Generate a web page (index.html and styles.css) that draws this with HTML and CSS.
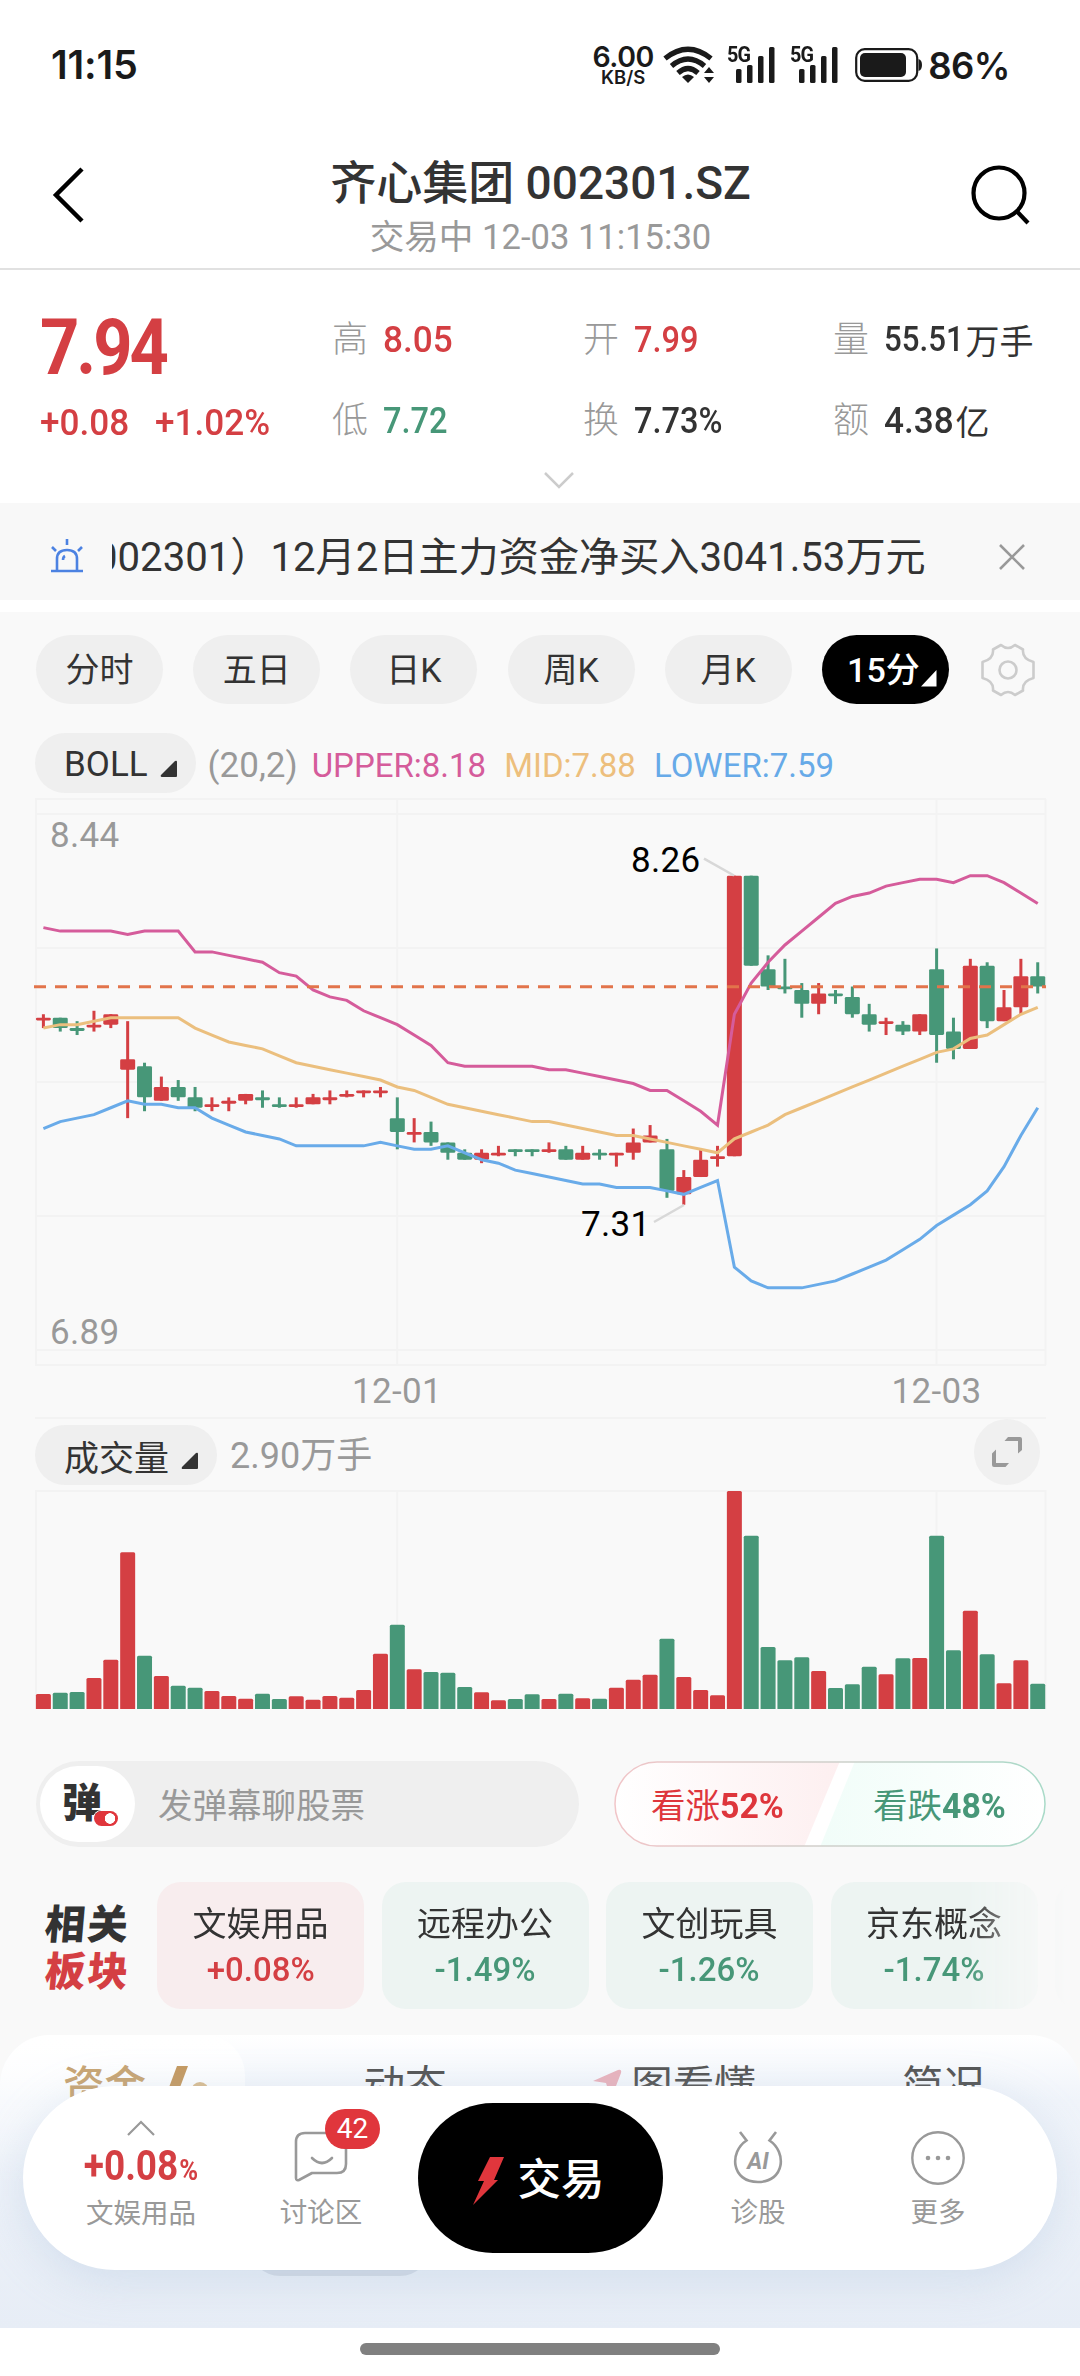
FILE: index.html
```html
<!DOCTYPE html>
<html lang="zh-CN">
<head>
  <meta charset="UTF-8">
  <meta name="viewport" content="width=device-width, initial-scale=1.0">
  <title>齐心集团 002301.SZ</title>
  <link rel="stylesheet" href="styles.css">
</head>
<body>

<div class="status-bar">
  <span class="time">11:15</span>
  <div class="status-icons">
    <div class="speed"><b>6.00</b><span>KB/S</span></div>
    <svg class="wifi" width="52" height="38" viewBox="0 0 52 38" fill="none" stroke="#1a1a1a" stroke-width="5.200">
      <path d="M2 12.500 Q25 -6 48 12.500"/>
      <path d="M8.500 20 Q25 6 41.500 20"/>
      <path d="M15 27 Q25 18 35 27"/>
      <path d="M19 31 Q25 26 31 31 L25 37 Z" fill="#1a1a1a" stroke="none"/>
      <path d="M41 27 L46 21 L51 27 Z M41 31 L46 37 L51 31 Z" fill="#1a1a1a" stroke="none"/>
    </svg>
    <div class="signal">
      <span>5G</span>
      <svg width="40" height="38" viewBox="0 0 40 38" fill="#1a1a1a"><rect x="0" y="23" width="5.500" height="14" rx="1.500"/><rect x="11" y="19" width="5.500" height="18" rx="1.500"/><rect x="22" y="10" width="5.500" height="27" rx="1.500"/><rect x="33" y="1" width="5.500" height="36" rx="1.500"/></svg>
    </div>
    <div class="signal">
      <span>5G</span>
      <svg width="40" height="38" viewBox="0 0 40 38" fill="#1a1a1a"><rect x="0" y="23" width="5.500" height="14" rx="1.500"/><rect x="11" y="19" width="5.500" height="18" rx="1.500"/><rect x="22" y="10" width="5.500" height="27" rx="1.500"/><rect x="33" y="1" width="5.500" height="36" rx="1.500"/></svg>
    </div>
    <svg class="battery" width="68" height="34" viewBox="0 0 68 34">
      <rect x="1.200" y="1.200" width="61" height="31.600" rx="8.500" fill="none" stroke="#1a1a1a" stroke-width="2.200"/>
      <rect x="5" y="5" width="46" height="24" rx="5" fill="#1a1a1a"/>
      <path d="M63.500 11 Q67 12 67 17 Q67 22 63.500 23 Z" fill="#1a1a1a"/>
    </svg>
    <span class="percent">86%</span>
  </div>
</div>

<header class="header">
  <svg width="40" height="60" viewBox="0 0 40 60" fill="none" stroke="#000" stroke-width="4.500"><path d="M35 4 L9 30 L35 56"/></svg>
  <div class="header-title">
    <h1>齐心集团 002301.SZ</h1>
    <p>交易中 12-03 11:15:30</p>
  </div>
  <svg width="64" height="64" viewBox="0 0 64 64" fill="none" stroke="#000" stroke-width="4.200"><circle cx="30" cy="30" r="25.500"/><path d="M48 48.500 L59 60"/></svg>
</header>

<section class="quote">
  <div class="quote-grid">
    <div class="price"><span class="num">7.94</span></div>
    <div class="cell"><i>高</i><b class="num wide up">8.05</b></div>
    <div class="cell"><i>开</i><b class="num up">7.99</b></div>
    <div class="cell cell-small"><i>量</i><b class="num">55.51</b><span class="unit">万手</span></div>
    <div class="change up"><span class="num wide">+0.08</span><span class="num wide">+1.02%</span></div>
    <div class="cell"><i>低</i><b class="num down">7.72</b></div>
    <div class="cell"><i>换</i><b class="num">7.73%</b></div>
    <div class="cell"><i>额</i><b class="num wide">4.38</b><span class="unit unit-b">亿</span></div>
  </div>
  <svg class="more" width="34" height="20" viewBox="0 0 34 20" fill="none" stroke="#ccc" stroke-width="2.500"><path d="M3 2 L17 16 L31 2"/></svg>
</section>

<div class="alert">
  <svg width="36" height="38" viewBox="0 0 36 38" fill="none" stroke="#4c82e2" stroke-width="2.600">
    <path d="M1 34H33M7 34V22Q7 13 17 13Q27 13 27 22V34M17 2V8M2 10L6 14M32 10L28 14M13 23Q13 20 15 19"/>
  </svg>
  <div class="alert-text"><span>002301）12月2日主力资金净买入3041.53万元</span></div>
  <svg width="28" height="28" viewBox="0 0 28 28" fill="none" stroke="#999" stroke-width="2.600"><path d="M2 2L26 26M26 2L2 26"/></svg>
</div>

<main class="main">
  <div class="tabs">
    <span class="tab">分时</span>
    <span class="tab">五日</span>
    <span class="tab">日K</span>
    <span class="tab">周K</span>
    <span class="tab">月K</span>
    <span class="tab active">15分<svg class="corner" width="16" height="17" viewBox="0 0 16 17"><path d="M15.500 0V16.500H0Z" fill="#fff"/></svg></span>
    <svg class="gear" width="56" height="56" viewBox="0 0 56 56" fill="none" stroke="#ccc" stroke-width="2.600" stroke-linejoin="round">
      <path d="M21 3 Q28 9 35 3 L43 7.500 Q42 17 53.500 20 V36 Q42 39 43 48.500 L35 53 Q28 47 21 53 L13 48.500 Q14 39 2.500 36 V20 Q14 17 13 7.500 Z"/>
      <circle cx="28" cy="28" r="8.500"/>
    </svg>
  </div>

  <div class="indicator">
    <span class="pill">BOLL<svg width="18" height="18" viewBox="0 0 18 18"><path d="M15 1Q17 0 17 2V16Q17 17 16 17H2Q0 17 1 15Z" fill="#333"/></svg></span>
    <span class="param">(20,2)</span>
    <span class="upper">UPPER:8.18</span>
    <span class="mid">MID:7.88</span>
    <span class="lower">LOWER:7.59</span>
  </div>

  <svg id="kline" class="kline" width="1080" height="623" viewBox="0 796 1080 623"></svg>

  <div class="volume-head">
    <span class="pill">成交量<svg width="18" height="18" viewBox="0 0 18 18"><path d="M15 1Q17 0 17 2V16Q17 17 16 17H2Q0 17 1 15Z" fill="#333"/></svg></span>
    <span class="param">2.90万手</span>
    <span class="expand"><svg width="30" height="30" viewBox="0 0 30 30" fill="#999"><path d="M16 0H28Q30 0 30 2V13L26 16.500V4H12.500ZM4 12.500V26H17L13.500 30H2Q0 30 0 28V16.500Z"/></svg></span>
  </div>

  <svg id="volume" class="volume" width="1080" height="220" viewBox="0 1490 1080 220"></svg>

  <div class="chat-row">
    <div class="chat-input">
      <span class="danmu">弹<i></i></span>
      <span class="placeholder">发弹幕聊股票</span>
    </div>
    <div class="vote">
      <svg class="vote-bg" width="432" height="86" viewBox="0 0 432 86">
        <defs>
          <linearGradient id="vr"><stop offset="0" stop-color="#fff"/><stop offset="1" stop-color="#fdeff0"/></linearGradient>
          <linearGradient id="vg"><stop offset="0" stop-color="#f1fdf9"/><stop offset="1" stop-color="#fff"/></linearGradient>
          <linearGradient id="vb"><stop offset="0" stop-color="#f1c5c8"/><stop offset=".5" stop-color="#cfd0cb"/><stop offset="1" stop-color="#a9dac8"/></linearGradient>
          <clipPath id="vc"><rect x="1" y="1" width="430" height="84" rx="42"/></clipPath>
        </defs>
        <g clip-path="url(#vc)">
          <rect width="432" height="86" fill="#fff"/>
          <path d="M0 0H226L190 86H0Z" fill="url(#vr)"/>
          <path d="M241 0H432V86H206Z" fill="url(#vg)"/>
        </g>
        <rect x="1" y="1" width="430" height="84" rx="42" fill="none" stroke="url(#vb)" stroke-width="1.500"/>
      </svg>
      <span class="bull">看涨<b>52%</b></span>
      <span class="bear">看跌<b>48%</b></span>
    </div>
  </div>

  <div class="sectors">
    <div class="sectors-title"><span>相关</span><span class="red">板块</span></div>
    <div class="sector-list">
      <div class="sector sector-up"><span>文娱用品</span><b>+0.08%</b></div>
      <div class="sector"><span>远程办公</span><b>-1.49%</b></div>
      <div class="sector"><span>文创玩具</span><b>-1.26%</b></div>
      <div class="sector"><span>京东概念</span><b>-1.74%</b></div>
      <div class="sector"></div>
    </div>
  </div>

  <section class="panel">
    <div class="panel-tabs">
      <span class="gold">资金<svg width="46" height="40" viewBox="0 0 46 40"><path d="M13 0H24L12 32H1Z" fill="#c59a62"/><circle cx="36" cy="25" r="9" fill="#d9bc91"/></svg></span>
      <span>动态</span>
      <span><svg class="arrow" width="30" height="30" viewBox="0 0 30 30"><path d="M0 12L25 1Q29 0 28 4L18 30L13 14Z" fill="#e9b3bd"/></svg>图看懂</span>
      <span>简况</span>
    </div>
    <div class="panel-chip"></div>
  </section>
</main>

<nav class="nav">
  <div class="nav-item nav-sector">
    <svg width="28" height="16" viewBox="0 0 28 16" fill="none" stroke="#999" stroke-width="2.200"><path d="M1 15L14 2L27 15"/></svg>
    <strong class="num">+0.08<small>%</small></strong>
    <span>文娱用品</span>
  </div>
  <div class="nav-item nav-talk">
    <svg width="54" height="52" viewBox="0 0 54 52" fill="none" stroke="#999" stroke-width="2.600" stroke-linejoin="round" stroke-linecap="round"><path d="M11 2H43Q52 2 52 11V33Q52 42 43 42H18L5 49Q2 50 2 47V11Q2 2 11 2ZM18 27Q28 37 38 27"/></svg>
    <em>42</em>
    <span>讨论区</span>
  </div>
  <div class="trade">
    <svg width="32" height="48" viewBox="0 0 32 48"><path d="M17 0H31L21 23H25L0 48L11 24H5Z" fill="#e0363c"/></svg>
    <span>交易</span>
  </div>
  <div class="nav-item nav-ai">
    <svg width="52" height="54" viewBox="0 0 52 54" fill="none" stroke="#999" stroke-width="2.600">
      <path d="M8 2L14.500 10.500C-3 22 -1 52 26 52C53 52 55 22 37.500 10.500L44 2"/>
      <text x="26" y="39" text-anchor="middle" class="ai-text">AI</text>
    </svg>
    <span>诊股</span>
  </div>
  <div class="nav-item nav-more">
    <svg width="56" height="56" viewBox="0 0 56 56"><circle cx="28" cy="28" r="25.700" fill="none" stroke="#999" stroke-width="2.400"/><g fill="#999"><circle cx="18" cy="28" r="2.300"/><circle cx="28" cy="28" r="2.300"/><circle cx="38" cy="28" r="2.300"/></g></svg>
    <span>更多</span>
  </div>
</nav>

<div class="home"><i></i></div>

<script src="script.js"></script>
</body>
</html>
```
FILE: styles.css
```css
* { box-sizing: border-box; }
body {
  margin: 0;
  width: 1080px;
  height: 2376px;
  position: relative;
  overflow: hidden;
  background: #fff;
  color: #333;
  font-family: Roboto, "Noto Sans CJK SC", sans-serif;
}
svg { display: block; flex: none; }
h1, p { margin: 0; font-weight: normal; }
i, em { font-style: normal; }
.up { color: #d43f43; }
.down { color: #479778; }
.num { display: inline-block; transform: scaleX(.88); transform-origin: left center; white-space: nowrap; }
.num.wide { transform: scaleX(.95); }

/* status bar */
.status-bar { height: 130px; padding: 0 70px 0 51px; display: flex; align-items: center; justify-content: space-between; color: #1a1a1a; }
.time { font: 600 39.500px Inter, sans-serif; letter-spacing: -.2px; }
.status-icons { display: flex; align-items: center; }
.speed { width: 62px; display: flex; flex-direction: column; align-items: center; font-family: Inter, sans-serif; margin-right: 9px; }
.speed b { font-size: 28.500px; line-height: 23px; font-weight: 600; letter-spacing: -.5px; }
.speed span { font-size: 18.500px; line-height: 18px; font-weight: 600; }
.signal { position: relative; display: flex; padding-left: 9px; margin-left: 14px; }
.wifi + .signal { margin-left: 12px; }
.signal span { position: absolute; left: 0; top: -4px; font: 700 22px Roboto, sans-serif; letter-spacing: -1px; transform: scaleX(.9); transform-origin: left; }
.battery { margin: 0 5px 0 16px; }
.percent { font: 600 36.500px Inter, sans-serif; letter-spacing: -.5px; margin-top: 2px; }

/* title */
.header { height: 140px; padding: 0 47px; display: flex; justify-content: space-between; align-items: center; border-bottom: 2px solid #e1e1e1; }
.header > svg { margin-top: -9px; }
.header-title { text-align: center; padding: 22px 0 0 25px; height: 140px; }
.header h1 { font-size: 46px; line-height: 64px; font-weight: 500; white-space: nowrap; }
.header p { font-size: 34.600px; line-height: 44px; color: #999; }

/* quote */
.quote { height: 233px; padding: 29px 0 0 40px; }
.quote-grid { display: grid; grid-template-columns: 292px 251px 250px 1fr; grid-template-rows: 81px 80px; }
.price { color: #d43f43; font-size: 78px; font-weight: 700; line-height: 98px; height: 81px; letter-spacing: -3.500px; }
.change { font-size: 37px; font-weight: 500; line-height: 86px; display: flex; gap: 21px; }
.cell { display: flex; align-items: center; height: 80px; font-size: 37px; white-space: nowrap; }
.cell i { color: #999; font-size: 36px; width: 51px; font-weight: 300; margin-top: -6px; }
.cell b { font-weight: 500; }
.cell-small { font-size: 35.500px; }
.unit { font-size: 34px; margin-left: -9px; }
.unit-b { margin-left: -2px; }
.more { margin: 11px 0 0 502px; }

.alert { height: 97px; background: #f8f8f8; display: flex; align-items: center; padding: 7px 54px 0 50px; }
.alert > svg:first-child { margin-top: 2px; }
.alert > svg:last-child { margin-top: 3px; }
.alert-text { margin-left: 26px; width: 820px; margin-right: 66px; padding-top: 5px; overflow: hidden; font-size: 40.150px; line-height: 60px; white-space: nowrap; }
.alert-text span { margin-left: -17px; }

/* chart area */
.main { margin-top: 12px; background: #f9f9f9; }
.tabs { padding: 23px 0 0 36px; display: flex; gap: 30.200px; align-items: center; }
.tab { position: relative; width: 127px; height: 69px; border-radius: 35px; background: #efefef; font-size: 34px; line-height: 70px; text-align: center; }
.tab.active { background: #000; color: #fff; font-weight: 500; padding-right: 4px; }
.corner { position: absolute; right: 12px; bottom: 17px; }
.gear { margin-left: 1px; }
.indicator { margin-top: 29px; padding-left: 35px; display: flex; align-items: center; height: 60px; font-size: 33px; line-height: 40px; white-space: nowrap; }
.indicator > span:not(.pill) { padding-top: 5px; }
.pill { display: flex; align-items: center; gap: 12px; height: 60px; border-radius: 30px; background: #efefef; padding: 3px 18px 0 29px; font-size: 35px; color: #333; }
.pill svg { margin-top: 8px; }
.param { color: #999; font-size: 35px; margin-left: 12px; }
.upper { color: #d55c9b; margin-left: 14px; }
.mid { color: #edbf7d; margin-left: 18px; }
.lower { color: #67aae8; margin-left: 18px; }
.kline { margin-top: 3px; }
.grid { stroke: #f3f3f3; stroke-width: 2; fill: none; }
.axis { fill: #999; font-size: 35px; letter-spacing: .3px; }
.mark { fill: #000; font-size: 35px; letter-spacing: .3px; }
.leader { stroke: #d8d8d8; stroke-width: 2.500; }
.line { fill: none; stroke-width: 3; }
.line.upper { stroke: #d55c9b; }
.line.mid { stroke: #ebbf7e; }
.line.lower { stroke: #69abe9; }
.now { stroke: #e2744b; stroke-width: 3; stroke-dasharray: 12 9; }

.volume-head { display: flex; align-items: flex-end; height: 66px; padding: 0 40px 0 35px; }
.volume-head .pill { padding-top: 0; }
.volume-head .pill svg { margin-top: 11px; }
.volume-head .param { line-height: 63px; height: 60px; font-size: 36px; margin-left: 13px; }
.expand { width: 66px; height: 66px; border-radius: 50%; background: #f0f0f0; margin-left: auto; display: flex; align-items: center; justify-content: center; }
.volume { margin-top: 5px; }

.chat-row { margin-top: 51px; padding: 0 34px 0 36px; display: flex; justify-content: space-between; }
.chat-input { width: 543px; height: 86px; border-radius: 43px; background: #efefef; display: flex; align-items: center; padding-left: 4px; }
.danmu { position: relative; width: 95px; height: 76px; border-radius: 38px; background: #fff; font-size: 40px; font-weight: 900; line-height: 76px; padding-left: 22px; }
.danmu i { position: absolute; left: 54px; top: 45px; width: 24px; height: 15px; border-radius: 8px; background: radial-gradient(circle at 16px 7.500px, #fff 5px, #e0363c 5.500px); box-shadow: 0 0 0 1px #fff; }
.placeholder { margin: -2px 0 0 23px; font-size: 34.500px; color: #999; }
.vote { position: relative; width: 432px; height: 86px; display: flex; align-items: center; font-size: 34.500px; }
.vote-bg { position: absolute; left: 0; top: 0; }
.vote span { position: relative; width: 136px; white-space: nowrap; margin-top: -3px; }
.vote .bull { margin-left: 37px; color: #de363c; }
.vote .bear { margin-left: 86px; color: #479778; }
.vote b { font-weight: 700; display: inline-block; transform: scaleX(.98); transform-origin: left; }

/* related sectors */
.sectors { margin-top: 35px; height: 127px; display: flex; }
.sectors-title { width: 157px; padding: 20px 0 0 45px; display: flex; flex-direction: column; font-size: 40.500px; line-height: 47px; font-weight: 900; letter-spacing: 2px; }
.sectors-title span { transform: skewX(-5deg); transform-origin: left; }
.sectors-title .red { color: #d43f43; }
.sector-list { width: 923px; display: flex; gap: 17.500px; overflow: hidden; -webkit-mask-image: linear-gradient(90deg, #000 810px, transparent 910px); mask-image: linear-gradient(90deg, #000 810px, transparent 910px); }
.sector { flex: none; width: 207px; height: 127px; border-radius: 24px; background: #edf4f2; color: #479778; display: flex; flex-direction: column; align-items: center; padding-top: 19px; }
.sector span { color: #333; font-size: 34px; line-height: 46px; }
.sector b { font-size: 34px; line-height: 44px; font-weight: 500; transform: scaleX(.97); }
.sector-up { background: #f8edee; color: #d43f43; }

.panel { position: relative; margin-top: 26px; height: 293px; border-radius: 50px 50px 0 0; background: linear-gradient(#fff, #f0f4fa 22%, #e7edf6); overflow: hidden; }
.panel-tabs { display: grid; grid-template-columns: 268px 274px 265px 273px; height: 82px; padding-top: 22px; font-size: 41.500px; line-height: 60px; color: #555; }
.panel-tabs > span { display: flex; justify-content: center; }
.panel-tabs .gold { width: 245px; height: 150px; margin-top: -22px; padding: 22px 0 0 63px; justify-content: flex-start; color: #c8a574; font-weight: 500; border-radius: 0 40px 0 0; background: linear-gradient(#fff, rgba(255, 255, 255, 0)); }
.gold svg { margin: 9px 0 0 18px; }
.arrow { margin: 12px 8px 0 0; }
.panel-chip { width: 180px; height: 60px; border-radius: 30px; background: #d3dae5; margin: 99px 0 0 250px; }

/* bottom bar floats over the panel */
.nav { position: absolute; left: 23px; top: 2086px; width: 1034px; height: 184px; border-radius: 92px; background: #fff; box-shadow: 0 10px 45px rgba(160, 185, 215, .3); display: flex; padding: 17px 29px 0 29px; }
.nav-item { position: relative; width: 178px; display: flex; flex-direction: column; align-items: center; font-size: 27.500px; line-height: 38px; color: #999; }
.nav-item > span { margin-top: auto; margin-bottom: 38px; }
.nav-item > svg { margin-top: 28px; }
.nav-sector > svg { margin-top: 17px; }
.nav-sector strong { margin-top: 5px; font-size: 42px; line-height: 50px; font-weight: 700; color: #d43f43; transform-origin: center; }
.nav-sector small { font-size: 29px; margin-left: 1px; }
.nav-talk em { position: absolute; left: 93px; top: 6px; width: 55px; height: 40px; border-radius: 20px; background: #e0363c; color: #fff; font-size: 28px; line-height: 40px; text-align: center; }
.nav-talk { margin-left: 2px; }
.trade { width: 245px; height: 150px; border-radius: 75px; background: #000; color: #fff; display: flex; align-items: center; justify-content: center; gap: 13px; font-size: 43.500px; font-weight: 500; margin: 0 6px 0 8px; padding-right: 4px; }
.trade svg { margin-top: 5px; }
.trade span { margin-top: -4px; }
.ai-text { font: italic 700 23px Roboto, sans-serif; fill: #999; stroke: none; }
.nav-ai > svg, .nav-more > svg { margin-top: 27px; }
.nav-more { margin-left: 2px; }

.home { height: 48px; background: #fff; padding-top: 15px; }
.home i { display: block; width: 360px; height: 12px; border-radius: 6px; background: #808080; margin: 0 auto; }
```
FILE: script.js
```js
// [up, top, bottom, high, low, volume], prices in cents
const bars = [
  [1,785,785,786,782,15],[0,785,782,785,781,16.3],[0,782,782,784,780,17],[1,783,783,787,781,31],[1,786,783,786,782,49.3],
  [1,773,770,784,756,156.7],[0,771,762,772,758,53.3],[1,765,761,768,761,33],[0,765,762,767,761,23.3],[0,762,759,765,758,21.3],
  [1,760,760,762,758,18],[1,761,761,762,758,13],[1,763,761,763,760,10.3],[0,762,762,764,759,15.3],[0,760,760,762,759,10],
  [1,760,760,762,759,12.7],[1,762,760,763,760,9.3],[1,762,762,764,760,13],[1,763,763,764,762,11.3],[1,764,764,764,762,19],
  [1,764,764,765,762,55.3],[0,756,752,762,747,84.3],[1,752,752,756,749,39.7],[0,752,749,755,748,37],[0,749,746,749,744,36.3],
  [0,746,744,747,744,22],[1,746,744,747,743,16.7],[1,746,746,748,745,8.7],[0,747,747,747,745,10],[0,747,747,747,745,14.7],
  [1,747,747,749,746,10],[0,747,744,748,744,15.3],[1,746,744,748,744,10.7],[0,746,746,747,744,10.3],[1,746,746,746,742,21.3],
  [1,749,746,753,744,29.3],[1,751,749,754,749,34.3],[0,747,735,750,733,70.3],[1,739,734,741,731,32],[1,744,739,747,739,19],
  [1,745,745,748,742,13.7],[1,826,745,826,745,218],[0,826,800,826,800,173.3],[0,799,794,803,793,62],[0,794,794,802,792,48.7],
  [0,793,789,795,785,51.7],[1,792,789,795,786,38],[0,792,792,793,789,21],[0,791,786,794,785,24.7],[0,786,783,789,781,42.3],
  [1,784,784,785,780,34.7],[0,783,781,784,780,50.7],[1,786,781,786,780,51],[0,799,780,805,772,173.3],[0,781,776,785,773,58.7],
  [1,800,776,802,776,98.3],[0,800,784,801,782,54.7],[1,788,784,793,784,25.7],[1,797,788,802,786,48.7],[0,797,794,801,792,25.3]
];
const boll = {
  upper: [811,810,810,810,810,809,810,810,810,804,804,803,802,801,798,797,793,791,790,787,785,783,780,777,772,771,771,771,771,771,770,770,769,768,767,766,764,764,761,758,754,786,795,801,806,810,814,818,820,821,823,824,825,825,824,826,826,824,821,818],
  mid: [782,783,783,784,785,785,785,785,785,782,780,778,777,776,774,772,771,770,769,768,767,765,764,762,760,759,758,757,756,755,755,754,753,752,751,751,750,749,748,747,746,750,752,754,757,759,761,763,765,767,769,771,773,775,776,779,780,783,786,788],
  lower: [753,755,756,757,759,761,760,760,759,759,756,754,752,751,750,748,748,748,748,748,749,748,747,747,748,746,744,743,741,740,739,738,737,737,736,736,736,735,734,736,738,713,709,707,707,707,708,709,711,713,715,718,721,725,728,731,735,742,751,759]
};
const RED = '#d43f43', GREEN = '#479778';
const cx = i => 43.4 + i * 16.853;
const y = p => 875.7 + (826 - p) * 3.4635;

let k = '';
[799, 814, 948, 1082, 1216, 1350, 1365].forEach(g => k += `<path class="grid" d="M35 ${g}H1046"/>`);
[36, 397.3, 936.6, 1045.5].forEach(g => k += `<path class="grid" d="M${g} 799V1365"/>`);
k += '<path class="grid" d="M35 1418H1046"/>';
bars.forEach((b, i) => {
  const color = b[0] ? RED : GREEN, x = cx(i);
  k += `<rect x="${x - 1.5}" y="${y(b[3])}" width="3" height="${y(b[4]) - y(b[3])}" fill="${color}"/>`;
  k += `<rect x="${x - 7.5}" y="${y(b[1])}" width="15" height="${Math.max(2.8, y(b[2]) - y(b[1]))}" rx="1.4" fill="${color}"/>`;
});
for (const name in boll) {
  k += `<polyline class="line ${name}" points="${boll[name].map((p, i) => cx(i) + ',' + y(p)).join(' ')}"/>`;
}
k += `<path class="now" d="M34 ${y(794) + .2}H1046"/>`;
k += '<path class="leader" d="M704 858.700L734 875.500M654 1222L684 1205"/>';
k += '<text class="axis" x="50" y="847">8.44</text><text class="axis" x="50" y="1343.500">6.89</text>';
k += '<text class="mark" x="631" y="871.500">8.26</text><text class="mark" x="581" y="1236">7.31</text>';
k += '<text class="axis" x="397" y="1403" text-anchor="middle">12-01</text><text class="axis" x="936.500" y="1403" text-anchor="middle">12-03</text>';
document.getElementById('kline').innerHTML = k;

let v = '<path class="grid" d="M36 1709V1491H1045.500V1709M397.300 1491V1709M936.600 1491V1709"/>';
bars.forEach((b, i) => {
  v += `<path d="M${cx(i) - 7.5} 1709v${1.5 - b[5]}q0 -1.500 1.500 -1.500h12q1.500 0 1.500 1.500v${b[5] - 1.5}z" fill="${b[0] ? RED : GREEN}"/>`;
});
document.getElementById('volume').innerHTML = v;
```
